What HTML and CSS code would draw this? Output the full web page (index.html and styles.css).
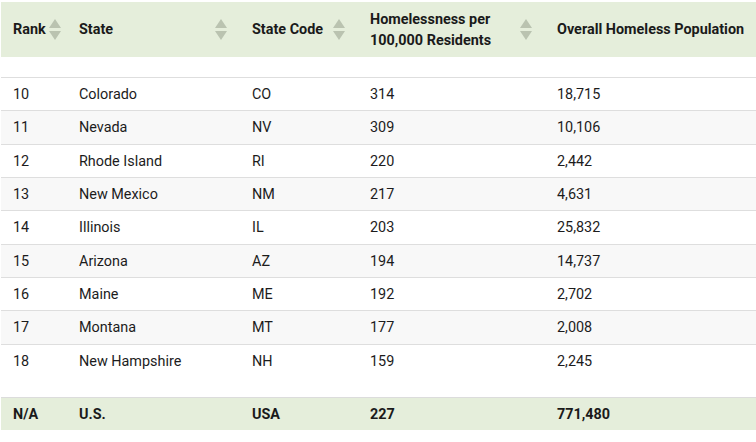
FILE: index.html
```html
<!DOCTYPE html>
<html lang="en">
<head>
<meta charset="utf-8">
<title>Homelessness by State</title>
<link rel="stylesheet" href="styles.css">
</head>
<body>
<table class="data">
  <colgroup>
    <col class="c1"><col class="c2"><col class="c3"><col class="c4"><col class="c5">
  </colgroup>
  <thead>
    <tr>
      <th class="th-rank"><div class="th-in"><span>Rank</span><svg class="sort" viewBox="0 0 12 21" width="12" height="21"><polygon points="6,0 12,9 0,9"/><polygon points="0,12 12,12 6,21"/></svg></div></th>
      <th><div class="th-in"><span>State</span><svg class="sort" viewBox="0 0 12 21" width="12" height="21"><polygon points="6,0 12,9 0,9"/><polygon points="0,12 12,12 6,21"/></svg></div></th>
      <th><div class="th-in"><span>State Code</span><svg class="sort" viewBox="0 0 12 21" width="12" height="21"><polygon points="6,0 12,9 0,9"/><polygon points="0,12 12,12 6,21"/></svg></div></th>
      <th><div class="th-in"><span>Homelessness per<br>100,000 Residents</span><svg class="sort" viewBox="0 0 12 21" width="12" height="21"><polygon points="6,0 12,9 0,9"/><polygon points="0,12 12,12 6,21"/></svg></div></th>
      <th class="th-last"><div class="th-in"><span>Overall Homeless Population</span></div></th>
    </tr>
  </thead>
  <tbody>
    <tr class="spacer"><td colspan="5"></td></tr>
    <tr class="row"><td>10</td><td>Colorado</td><td>CO</td><td>314</td><td>18,715</td></tr>
    <tr class="row alt"><td>11</td><td>Nevada</td><td>NV</td><td>309</td><td>10,106</td></tr>
    <tr class="row"><td>12</td><td>Rhode Island</td><td>RI</td><td>220</td><td>2,442</td></tr>
    <tr class="row alt"><td>13</td><td>New Mexico</td><td>NM</td><td>217</td><td>4,631</td></tr>
    <tr class="row"><td>14</td><td>Illinois</td><td>IL</td><td>203</td><td>25,832</td></tr>
    <tr class="row alt"><td>15</td><td>Arizona</td><td>AZ</td><td>194</td><td>14,737</td></tr>
    <tr class="row"><td>16</td><td>Maine</td><td>ME</td><td>192</td><td>2,702</td></tr>
    <tr class="row alt"><td>17</td><td>Montana</td><td>MT</td><td>177</td><td>2,008</td></tr>
    <tr class="row"><td>18</td><td>New Hampshire</td><td>NH</td><td>159</td><td>2,245</td></tr>
    <tr class="spacer"><td colspan="5"></td></tr>
  </tbody>
  <tfoot>
    <tr class="total"><td>N/A</td><td>U.S.</td><td>USA</td><td>227</td><td>771,480</td></tr>
  </tfoot>
</table>
</body>
</html>
```
FILE: styles.css
```css
html, body {
  margin: 0;
  padding: 0;
  background: #ffffff;
}
body {
  padding: 2px 0 0 1px;
  font-family: Roboto, "Liberation Sans", Arial, sans-serif;
  font-size: 14.4px;
  color: #1c1c1c;
}
.data {
  width: 755px;
  border-collapse: collapse;
  table-layout: fixed;
}
.c1 { width: 66px; }
.c2 { width: 173px; }
.c3 { width: 118px; }
.c4 { width: 187px; }
.c5 { width: 211px; }

thead th {
  background: #e5eedb;
  height: 55px;
  padding: 0 13px 0 12px;
  text-align: left;
  vertical-align: middle;
  font-weight: 700;
  line-height: 21px;
  color: #1a1a1a;
}
thead th.th-rank {
  padding-right: 6px;
}
thead th.th-last {
  padding-right: 0;
  white-space: nowrap;
}
.th-in {
  display: flex;
  align-items: center;
  justify-content: space-between;
}
.sort {
  flex: none;
  fill: #bac3b0;
}
.spacer td {
  height: 20px;
  padding: 0;
}
.row td {
  border-top: 1px solid #dedede;
  padding: 9px 12px 7px;
  line-height: 16.33px;
  white-space: nowrap;
}
.row.alt td {
  background: #f8f8f8;
}
.total td {
  background: #e5eedb;
  border-top: 1px solid #dcdcdc;
  padding: 9px 12px 7px;
  line-height: 16px;
  font-weight: 700;
  color: #1a1a1a;
}
```
